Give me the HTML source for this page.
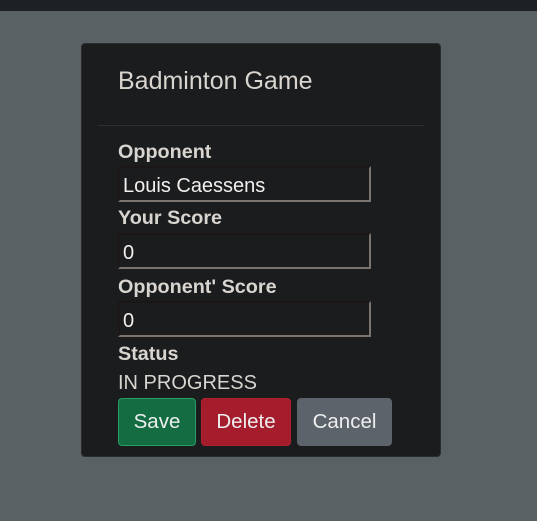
<!DOCTYPE html>
<html><head><style>
body{margin:0;width:537px;height:521px;background:#5a6165;font-family:"Liberation Sans",sans-serif;position:relative;overflow:hidden}
.top{position:absolute;left:0;top:0;width:537px;height:11px;background:#1e2124}
.card{position:absolute;left:81px;top:43px;width:360px;height:414px;background:#1b1c1e;border-radius:4px;border:1px solid #2a2c2e;box-sizing:border-box}
.a{position:absolute;left:36px;color:#d8d4cf;white-space:nowrap}
h1{position:absolute;left:36px;top:23px;margin:0;font-weight:normal;font-size:25px;color:#d8d4cf}
.sep{position:absolute;left:16px;top:81px;width:326px;height:1px;background:#2e3033}
.lbl{font-weight:bold;font-size:19.8px}
.inp{position:absolute;left:36px;width:253px;height:36px;box-sizing:border-box;border:2px solid;border-color:#1a1716 #7a7570 #7a7570 #1a1716;background:#1b1c1e;color:#f2f0ee;font-size:20px;padding:7px 0 0 3px}
.btn{position:absolute;top:354px;height:48px;box-sizing:border-box;border-radius:4px;color:#eee;font-size:20.5px;text-align:center;line-height:46px}
</style></head><body>
<div class="top"></div>
<div class="card">
<h1>Badminton Game</h1>
<div class="sep"></div>
<div class="a lbl" style="top:97px">Opponent</div>
<div class="inp" style="top:122px">Louis Caessens</div>
<div class="a lbl" style="top:163px">Your Score</div>
<div class="inp" style="top:189px">0</div>
<div class="a lbl" style="top:232px">Opponent' Score</div>
<div class="inp" style="top:257px">0</div>
<div class="a lbl" style="top:299px">Status</div>
<div class="a" style="top:328px;font-size:20px">IN PROGRESS</div>
<div class="btn" style="left:36px;width:78px;background:#146c43;border:1px solid #2a9d65">Save</div>
<div class="btn" style="left:119px;width:90px;background:#a51d2d;border:1px solid #b0202f">Delete</div>
<div class="btn" style="left:215px;width:95px;background:#5c636a;border:1px solid #5c636a">Cancel</div>
</div>
</body></html>
